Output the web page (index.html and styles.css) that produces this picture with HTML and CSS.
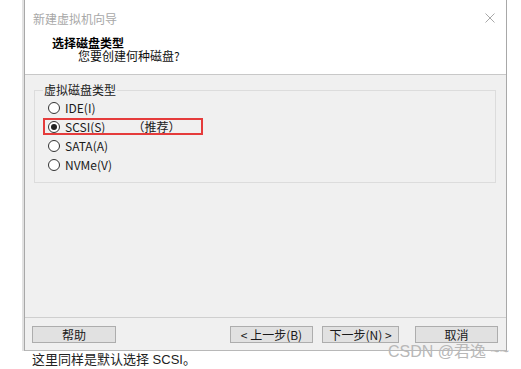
FILE: index.html
```html
<!DOCTYPE html>
<html>
  <head>
    <meta charset="UTF-8">
    <title>新建虚拟机向导</title>
    <link rel="stylesheet" href="styles.css">
  </head>
  <body>
    <div class="page">
      <div class="dialog">
        <div class="header">
          <div class="titlebar">
            <span class="title">新建虚拟机向导</span>
            <svg class="close" width="10" height="10" viewBox="0 0 10 10">
              <path d="M0.5 0.5 L9.5 9.5 M9.5 0.5 L0.5 9.5" stroke="#a8a8a8" stroke-width="1" fill="none"/>
            </svg>
          </div>
          <div class="heading">选择磁盘类型</div>
          <div class="sub">您要创建何种磁盘?</div>
        </div>

        <div class="content">
          <fieldset class="group">
            <legend>虚拟磁盘类型</legend>
            <div class="option"><span class="radio"></span>IDE(I)</div>
            <div class="option marked"><span class="radio checked"></span>SCSI(S)<span class="hint">（推荐）</span></div>
            <div class="option"><span class="radio"></span>SATA(A)</div>
            <div class="option"><span class="radio"></span>NVMe(V)</div>
          </fieldset>
        </div>

        <div class="footer">
          <button class="btn help">帮助</button>
          <div class="nav">
            <button class="btn">&lt; 上一步(B)</button>
            <button class="btn">下一步(N) &gt;</button>
          </div>
          <button class="btn">取消</button>
        </div>
      </div>

      <p class="caption">这里同样是默认选择 SCSI。</p>
      <span class="watermark">CSDN @君逸 ~~</span>
    </div>
  </body>
</html>
```

FILE: styles.css
```css
/* Page */
body {
  margin: 0;
  background-color: #FFFFFF;
  font-family: "Noto Sans CJK SC", "DejaVu Sans", sans-serif;
  font-size: 12px;
  color: #1A1A1A;
}

.page {
  position: relative;
  width: 521px;
  height: 369px;
  overflow: hidden;
}

/* Dialog window */
.dialog {
  display: flex;
  flex-direction: column;
  width: 481px;
  height: 350px;
  margin-left: 24px;
  background-color: #F0F0F0;
  border-left: 1px solid #A8A8A8;
  border-right: 1px solid #A8A8A8;
  border-bottom: 1px solid #B8B8B8;
  box-shadow: -2px 0 0 #E2E2E2;
}

.header {
  height: 74px;
  background-color: #FFFFFF;
  border-bottom: 1px solid #C8C8C8;
}

.titlebar {
  display: flex;
  align-items: center;
  justify-content: space-between;
  height: 36px;
  padding: 0 11px 0 8px;
}

.title {
  color: #A8A8A8;
  font-size: 12px;
}

.heading {
  padding-left: 27px;
  height: 13px;
  line-height: 13px;
  font-weight: bold;
  color: #000000;
}

.sub {
  padding-left: 53px;
  height: 13px;
  line-height: 13px;
  color: #111111;
}

/* Group box */
.content {
  flex: 1;
  padding: 8px 10px 0 9px;
}

.group {
  margin: 0;
  padding: 1px 0 9px 13px;
  border: 1px solid #DCDCDC;
  height: 88px;
}

.group legend {
  padding: 0 1px;
  margin-left: -5px;
  line-height: 14px;
  color: #1A1A1A;
}

.option {
  display: flex;
  align-items: center;
  height: 19px;
  color: #1A1A1A;
}

.option.marked {
  box-sizing: border-box;
  width: 158px;
  height: 15px;
  margin: 2px 0 2px -4px;
  padding-left: 4px;
  outline: 2px solid #E53B3B;
  outline-offset: -1px;
}

.hint {
  margin-left: 27px;
}

.radio {
  position: relative;
  width: 10px;
  height: 10px;
  margin-right: 5px;
  border: 1px solid #333333;
  border-radius: 50%;
  background-color: #FFFFFF;
}

.radio.checked:after {
  content: "";
  position: absolute;
  top: 2px;
  left: 2px;
  width: 6px;
  height: 6px;
  border-radius: 50%;
  background-color: #222222;
}

/* Buttons */
.footer {
  display: flex;
  align-items: center;
  justify-content: space-between;
  height: 32px;
  padding: 0 8px 0 7px;
  border-top: 1px solid #CFCFCF;
}

.nav {
  display: flex;
  gap: 9px;
  margin-left: auto;
  margin-right: 16px;
}

.btn {
  height: 17px;
  padding: 0;
  background-color: #E1E1E1;
  border: 1px solid #ADADAD;
  font-family: "Noto Sans CJK SC", "DejaVu Sans", sans-serif;
  font-size: 12px;
  line-height: 15px;
  color: #1A1A1A;
  width: 83px;
}

.nav .btn {
  width: 83px;
}

.nav .btn + .btn {
  width: 77px;
}

.help {
  width: 84px;
}

/* Caption under the screenshot */
.caption {
  margin: 0 0 0 32px;
  height: 18px;
  line-height: 18px;
  font-family: "Liberation Sans", "Noto Sans CJK SC", sans-serif;
  font-size: 13px;
  color: #222222;
}

.watermark {
  position: absolute;
  left: 388px;
  top: 342px;
  font-family: "Liberation Sans", "Noto Sans CJK SC", sans-serif;
  font-size: 16px;
  line-height: 19px;
  color: #B8B8B8;
}
```
